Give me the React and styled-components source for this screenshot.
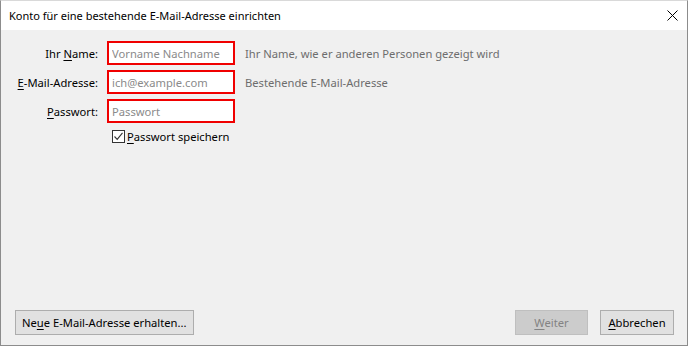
import styled, { createGlobalStyle } from "styled-components";

const GlobalStyle = createGlobalStyle`
  html, body {
    margin: 0;
    padding: 0;
    background: #ffffff;
  }
  body {
    font-family: "Noto Sans", "Open Sans", sans-serif;
    font-size: 11.2px;
  }
`;

const Window = styled.div`
  box-sizing: border-box;
  width: 688px;
  height: 346px;
  display: flex;
  flex-direction: column;
  border: 1px solid #8c8c8c;
  border-top-color: #d9d9d9;
  background: #f0f0f0;
`;

const TitleBar = styled.div`
  height: 29px;
  flex: none;
  display: flex;
  align-items: center;
  justify-content: space-between;
  padding: 0 9px 0 8px;
  background: #ffffff;
  color: #000000;
  font-size: 11px;
`;

const CloseButton = styled.button`
  border: 0;
  background: transparent;
  padding: 0;
  width: 12px;
  height: 12px;
  display: flex;
  align-items: center;
  justify-content: center;
`;

const Body = styled.div`
  flex: 1;
  display: flex;
  flex-direction: column;
  justify-content: space-between;
  padding: 11px 13px 10px 0;
`;

const Form = styled.div`
  display: grid;
  grid-template-columns: 97px 128px auto;
  column-gap: 9px;
  row-gap: 5px;
  align-items: center;
`;

const Label = styled.label`
  text-align: right;
  color: #000000;
  white-space: nowrap;
`;

const Key = styled.u`
  text-decoration: underline;
  text-underline-offset: 2px;
`;

const Field = styled.input`
  box-sizing: border-box;
  width: 128px;
  height: 24px;
  margin: 0;
  border: 2px solid #f00000;
  background: #ffffff;
  padding: 0 3px;
  font-family: inherit;
  font-size: 11.2px;
  outline: none;
  &::placeholder {
    color: #8a8a8a;
  }
`;

const Hint = styled.span`
  color: #6d6d6d;
  padding-left: 1px;
  white-space: nowrap;
`;

const CheckRow = styled.label`
  grid-column: 2 / 4;
  display: flex;
  align-items: center;
  gap: 2px;
  margin-top: 1px;
  padding-left: 5px;
  color: #000000;
`;

const Box = styled.span`
  box-sizing: border-box;
  width: 13px;
  height: 13px;
  border: 1px solid #333333;
  background: #ffffff;
  display: flex;
  align-items: center;
  justify-content: center;
`;

const Footer = styled.div`
  display: flex;
  align-items: center;
  padding-left: 14px;
`;

const Button = styled.button`
  box-sizing: border-box;
  height: 25px;
  min-width: ${(p) => p.$w || 73}px;
  margin-left: ${(p) => p.$gap || 0}px;
  padding: 0 6px;
  border: 1px solid ${(p) => (p.disabled ? "#bfbfbf" : "#adadad")};
  background: ${(p) => (p.disabled ? "#cccccc" : "#e1e1e1")};
  color: ${(p) => (p.disabled ? "#838383" : "#000000")};
  font-family: inherit;
  font-size: 11.2px;
`;

const Spacer = styled.div`
  flex: 1;
`;

const App = () => {
  return (
    <>
      <GlobalStyle />
      <Window>
        <TitleBar>
          <span>Konto für eine bestehende E-Mail-Adresse einrichten</span>
          <CloseButton aria-label="Schließen">
            <svg width="11" height="11" viewBox="0 0 11 11">
              <path d="M0.5 0.5 L10.5 10.5 M10.5 0.5 L0.5 10.5" stroke="#000" strokeWidth="1" />
            </svg>
          </CloseButton>
        </TitleBar>
        <Body>
          <Form>
            <Label>
              Ihr <Key>N</Key>ame:
            </Label>
            <Field placeholder="Vorname Nachname" />
            <Hint>Ihr Name, wie er anderen Personen gezeigt wird</Hint>

            <Label>
              <Key>E</Key>-Mail-Adresse:
            </Label>
            <Field placeholder="ich@example.com" />
            <Hint>Bestehende E-Mail-Adresse</Hint>

            <Label>
              <Key>P</Key>asswort:
            </Label>
            <Field type="password" placeholder="Passwort" />
            <span />

            <span />
            <CheckRow>
              <Box>
                <svg width="11" height="11" viewBox="0 0 11 11">
                  <path d="M1.5 5.5 L4.2 8.3 L9.5 1.8" fill="none" stroke="#333" strokeWidth="1.1" />
                </svg>
              </Box>
              <span>
                <Key>P</Key>asswort speichern
              </span>
            </CheckRow>
          </Form>
          <Footer>
            <Button $w={178}>
              Ne<Key>u</Key>e E-Mail-Adresse erhalten...
            </Button>
            <Spacer />
            <Button disabled>
              <Key>W</Key>eiter
            </Button>
            <Button $gap={12} $w={74}>
              <Key>A</Key>bbrechen
            </Button>
          </Footer>
        </Body>
      </Window>
    </>
  );
};

export default App;
